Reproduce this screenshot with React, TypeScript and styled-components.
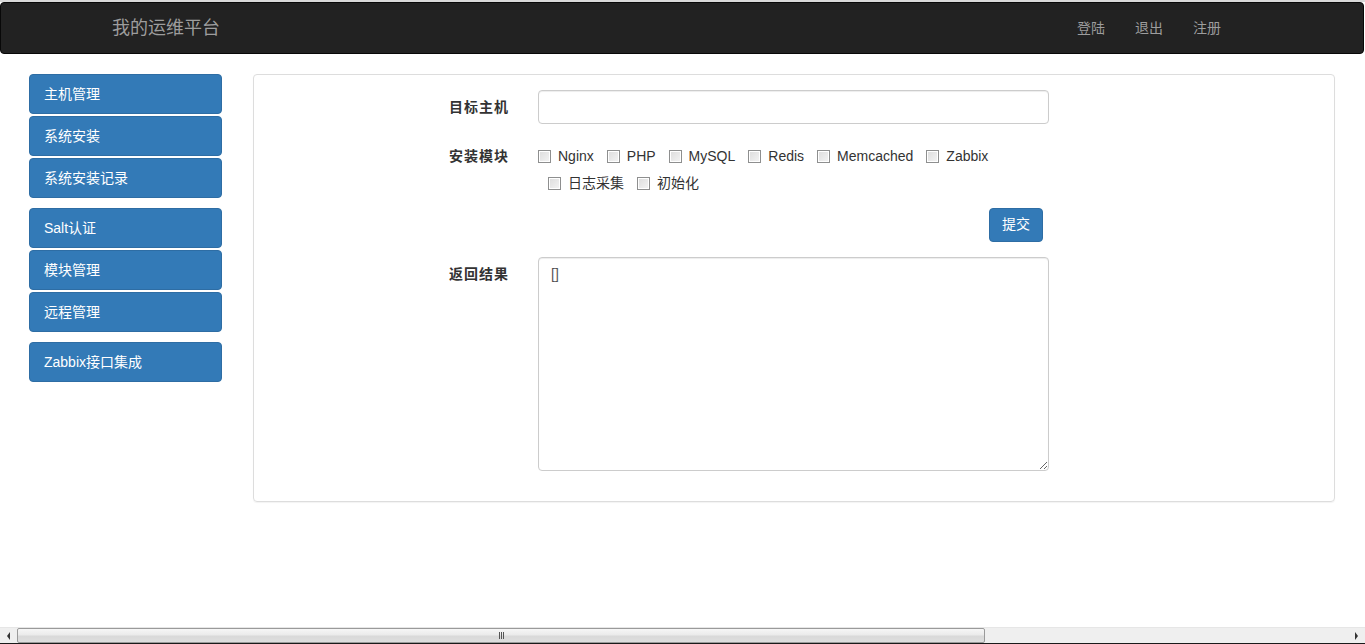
import React from "react";
import styled, { createGlobalStyle } from "styled-components";

const GlobalStyle = createGlobalStyle`
  html, body { margin: 0; padding: 0; background: #fff; }
  body {
    font-family: "Liberation Sans", Arial, "Noto Sans CJK SC", sans-serif;
    font-size: 14px;
    line-height: 1.42857;
    color: #333;
    overflow: hidden;
  }
  * { box-sizing: border-box; }
`;

const Page = styled.div`
  display: flex;
  flex-direction: column;
  min-height: 100vh;
  border-top: 2px solid #d9d9d9;
`;

const Navbar = styled.nav`
  width: 1364px;
  height: 52px;
  background: #222;
  border: 1px solid #080808;
  border-radius: 4px;
  display: flex;
  align-items: center;
  justify-content: space-between;
  padding: 0 127px 0 96px;
`;

const Brand = styled.a`
  display: block;
  padding: 15px;
  font-size: 18px;
  line-height: 20px;
  color: #9d9d9d;
  text-decoration: none;
`;

const NavLinks = styled.ul`
  display: flex;
  list-style: none;
  margin: 0;
  padding: 0;
`;

const NavLink = styled.a`
  display: block;
  padding: 15px;
  line-height: 20px;
  color: #9d9d9d;
  text-decoration: none;
`;

const Main = styled.div`
  display: flex;
  align-items: flex-start;
  gap: 31px;
  padding: 20px 30px 0 29px;
`;

const Sidebar = styled.aside`
  width: 193px;
  flex: 0 0 193px;
  display: flex;
  flex-direction: column;
  gap: 10px;
`;

const NavGroup = styled.div`
  display: flex;
  flex-direction: column;
  gap: 2px;
`;

const SideButton = styled.a`
  display: flex;
  align-items: center;
  height: 40px;
  padding: 1px 14px 0;
  background: #337ab7;
  border: 1px solid #2e6da4;
  border-radius: 4px;
  color: #fff;
  text-decoration: none;
  font-size: 14px;
`;

const Panel = styled.section`
  flex: 1;
  border: 1px solid #ddd;
  border-radius: 4px;
  padding: 15px 0;
  box-shadow: 0 1px 1px rgba(0, 0, 0, 0.05);
`;

const FormRow = styled.div`
  display: grid;
  grid-template-columns: 269px 511px;
  column-gap: 15px;
  margin-bottom: 15px;
`;

const Label = styled.label`
  text-align: right;
  font-weight: bold;
  letter-spacing: 1px;
  padding: 7px 14px 0 0;
  line-height: 20px;
  color: #333;
`;

const TextInput = styled.input`
  display: block;
  width: 511px;
  height: 34px;
  padding: 6px 12px;
  font: inherit;
  color: #555;
  background: #fff;
  border: 1px solid #ccc;
  border-radius: 4px;
  box-shadow: inset 0 1px 1px rgba(0, 0, 0, 0.075);
  outline: none;
`;

const CheckList = styled.div`
  display: flex;
  flex-wrap: wrap;
  row-gap: 7px;
  padding-top: 7px;
`;

const CheckItem = styled.label<{ $first?: boolean }>`
  display: inline-flex;
  align-items: center;
  line-height: 20px;
  margin-left: ${(p) => (p.$first ? "0" : "10px")};
  margin-right: 3px;
  color: #333;
  white-space: nowrap;
`;

const Box = styled.input`
  appearance: none;
  -webkit-appearance: none;
  width: 13px;
  height: 13px;
  margin: 0 7px 0 0;
  border: 1px solid #8e8f8f;
  background: linear-gradient(135deg, #dcdcdc 0%, #f4f4f4 100%);
  box-shadow: inset 0 0 0 1px #fff;
`;

const ActionRow = styled.div`
  display: flex;
  justify-content: flex-end;
  width: 795px;
  padding-right: 6px;
  margin-bottom: 15px;
`;

const SubmitButton = styled.button`
  height: 34px;
  padding: 6px 12px;
  font: inherit;
  color: #fff;
  background: #337ab7;
  border: 1px solid #2e6da4;
  border-radius: 4px;
`;

const ResultArea = styled.textarea`
  display: block;
  width: 511px;
  height: 214px;
  padding: 6px 12px;
  font: inherit;
  line-height: 20px;
  color: #555;
  background: #fff;
  border: 1px solid #ccc;
  border-radius: 4px;
  box-shadow: inset 0 1px 1px rgba(0, 0, 0, 0.075);
  outline: none;
  resize: both;
`;

const Scrollbar = styled.div`
  margin-top: auto;
  height: 17px;
  display: flex;
  align-items: stretch;
  background: #efefef;
  border-top: 1px solid #e6e6e6;
  border-bottom: 1px solid #1a1a1a;
`;

const ArrowButton = styled.div<{ $dir: "left" | "right" }>`
  flex: 0 0 17px;
  display: flex;
  align-items: center;
  justify-content: center;
  &::before {
    content: "";
    width: 0;
    height: 0;
    border-top: 4px solid transparent;
    border-bottom: 4px solid transparent;
    ${(p) =>
      p.$dir === "left"
        ? "border-right: 3px solid #333;"
        : "border-left: 3px solid #333;"}
  }
`;

const Thumb = styled.div`
  flex: 0 0 968px;
  border: 1px solid #9a9a9a;
  border-radius: 2px;
  background: linear-gradient(#f6f6f6 0%, #ebebeb 45%, #d9d9d9 55%, #dedede 100%);
  display: flex;
  align-items: center;
  justify-content: center;
  gap: 1px;
`;

const Grip = styled.span`
  width: 1px;
  height: 7px;
  background: #555;
`;

const Track = styled.div`
  flex: 1;
`;

const modules = ["Nginx", "PHP", "MySQL", "Redis", "Memcached", "Zabbix", "日志采集", "初始化"];

const groups = [
  ["主机管理", "系统安装", "系统安装记录"],
  ["Salt认证", "模块管理", "远程管理"],
  ["Zabbix接口集成"],
];

export default function App() {
  return (
    <>
      <GlobalStyle />
      <Page>
        <Navbar>
          <Brand href="#">我的运维平台</Brand>
          <NavLinks>
            <li><NavLink href="#">登陆</NavLink></li>
            <li><NavLink href="#">退出</NavLink></li>
            <li><NavLink href="#">注册</NavLink></li>
          </NavLinks>
        </Navbar>
        <Main>
          <Sidebar>
            {groups.map((g, i) => (
              <NavGroup key={i}>
                {g.map((t) => (
                  <SideButton key={t} href="#">{t}</SideButton>
                ))}
              </NavGroup>
            ))}
          </Sidebar>
          <Panel>
            <FormRow>
              <Label>目标主机</Label>
              <TextInput type="text" />
            </FormRow>
            <FormRow>
              <Label>安装模块</Label>
              <CheckList>
                {modules.map((m, i) => (
                  <CheckItem key={m} $first={i === 0}>
                    <Box type="checkbox" />
                    {m}
                  </CheckItem>
                ))}
              </CheckList>
            </FormRow>
            <ActionRow>
              <SubmitButton type="button">提交</SubmitButton>
            </ActionRow>
            <FormRow>
              <Label>返回结果</Label>
              <ResultArea defaultValue="[]" />
            </FormRow>
          </Panel>
        </Main>
        <Scrollbar>
          <ArrowButton $dir="left" />
          <Thumb>
            <Grip />
            <Grip />
            <Grip />
          </Thumb>
          <Track />
          <ArrowButton $dir="right" />
        </Scrollbar>
      </Page>
    </>
  );
}
